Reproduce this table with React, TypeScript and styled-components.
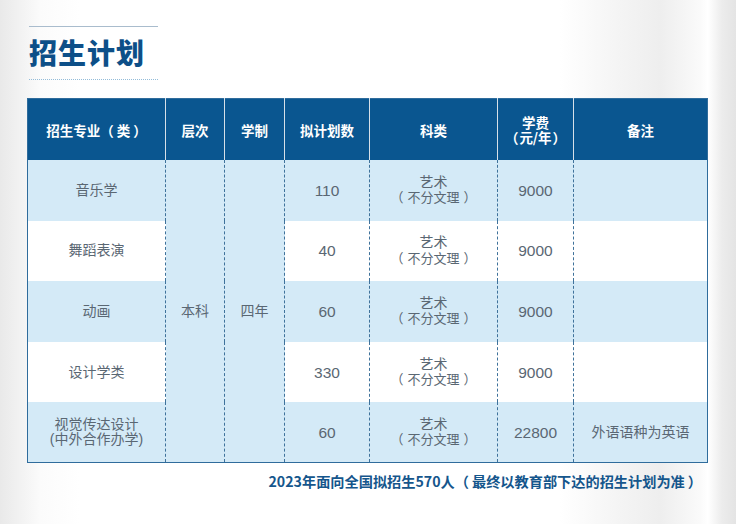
import React from "react";
import styled, { createGlobalStyle } from "styled-components";

const GlobalStyle = createGlobalStyle`
  html, body { margin: 0; padding: 0; }
  body {
    width: 736px;
    height: 524px;
    overflow: hidden;
    font-family: "Liberation Sans", "Noto Sans CJK SC", sans-serif;
    background: linear-gradient(
      to right,
      #e9e9e9 0px,
      #f1f1f1 18px,
      #fbfbfb 40px,
      #ffffff 80px,
      #ffffff 560px,
      #f4f4f4 620px,
      #eeeeee 660px,
      #fafafa 700px,
      #ffffff 708px,
      #ececec 722px,
      #e4e4e4 736px
    );
  }
`;

const Page = styled.div`
  display: flex;
  flex-direction: column;
  padding: 26px 0 0 27px;
  width: 680px;
`;

const Heading = styled.div`
  display: flex;
  flex-direction: column;
  width: 129px;
  margin-left: 2px;
`;

const TopRule = styled.div`
  height: 1px;
  background: #a9bccd;
`;

const Title = styled.h1`
  margin: 10px 0 0 0;
  font-family: "Noto Sans CJK SC", sans-serif;
  font-weight: 900;
  font-size: 28px;
  line-height: 30px;
  letter-spacing: 1px;
  color: #0d4f88;
  white-space: nowrap;
`;

const DottedRule = styled.div`
  margin-top: 12px;
  height: 0;
  border-top: 1px dotted #93bcd9;
`;

const Table = styled.table`
  margin-top: 18px;
  width: 680px;
  border-collapse: collapse;
  table-layout: fixed;
  border: 1px solid #2f6c9c;
`;

const HeadCell = styled.th`
  height: 61px;
  padding: 0;
  background: #0a5690;
  color: #ffffff;
  font-family: "Noto Sans CJK SC", sans-serif;
  font-weight: 600;
  font-size: 13.5px;
  line-height: 16px;
  text-align: center;
  vertical-align: middle;
  border-left: 1px solid #d7e0e8;
  &:first-child { border-left: none; }
`;

const HeadLine = styled.span`
  display: block;
  line-height: 15px;
`;

const Row = styled.tr<{ $alt?: boolean }>`
  height: 60.6px;
  background: ${(p) => (p.$alt ? "#ffffff" : "#d4eaf7")};
  & + & > td { border-top: 1px dashed #3f729b; }
`;

const Cell = styled.td<{ $merged?: boolean; $num?: boolean; $small?: boolean }>`
  padding: 0;
  text-align: center;
  vertical-align: middle;
  color: #5a6773;
  font-size: ${(p) => (p.$num ? "15.5px" : "14px")};
  line-height: ${(p) => (p.$small ? "15.5px" : "17px")};
  border-left: 1px dashed #3f729b;
  background: ${(p) => (p.$merged ? "#d4eaf7" : "transparent")};
  &:first-child { border-left: none; }
`;

const Sub = styled.span`
  display: block;
  font-size: 13px;
`;

const Paren = styled.span<{ $side: "open" | "close"; $gap?: number }>`
  margin-right: ${(p) => (p.$side === "open" ? `${p.$gap ?? 3}px` : "0")};
  margin-left: ${(p) => (p.$side === "close" ? `${p.$gap ?? 3}px` : "0")};
`;

const Note = styled.div`
  margin-top: 9px;
  padding-right: 5px;
  text-align: right;
  font-family: "Noto Sans CJK SC", sans-serif;
  font-weight: 700;
  font-size: 14.2px;
  line-height: 18px;
  color: #15568c;
  white-space: nowrap;
`;

const widths = [138, 59, 60, 85, 128, 76, 134];

type Item = { name: React.ReactNode; count: string; fee: string; remark?: string };

const items: Item[] = [
  { name: "音乐学", count: "110", fee: "9000" },
  { name: "舞蹈表演", count: "40", fee: "9000" },
  { name: "动画", count: "60", fee: "9000" },
  { name: "设计学类", count: "330", fee: "9000" },
  {
    name: (
      <>
        视觉传达设计
        <br />
        (中外合作办学)
      </>
    ),
    count: "60",
    fee: "22800",
    remark: "外语语种为英语",
  },
];

export default function App() {
  return (
    <>
      <GlobalStyle />
      <Page>
        <Heading>
          <TopRule />
          <Title>招生计划</Title>
          <DottedRule />
        </Heading>
        <Table>
          <colgroup>
            {widths.map((w, i) => (
              <col key={i} style={{ width: w }} />
            ))}
          </colgroup>
          <thead>
            <tr>
              <HeadCell>
                招生专业<Paren $side="open">（</Paren>类<Paren $side="close">）</Paren>
              </HeadCell>
              <HeadCell>层次</HeadCell>
              <HeadCell>学制</HeadCell>
              <HeadCell>拟计划数</HeadCell>
              <HeadCell>科类</HeadCell>
              <HeadCell>
                <HeadLine>学费</HeadLine>
                <HeadLine>
                  <Paren $side="open" $gap={1}>（</Paren>元/年<Paren $side="close" $gap={1}>）</Paren>
                </HeadLine>
              </HeadCell>
              <HeadCell>备注</HeadCell>
            </tr>
          </thead>
          <tbody>
            {items.map((it, i) => (
              <Row key={i} $alt={i % 2 === 1}>
                <Cell $small={i === 4}>{it.name}</Cell>
                {i === 0 && (
                  <>
                    <Cell rowSpan={5} $merged>
                      本科
                    </Cell>
                    <Cell rowSpan={5} $merged>
                      四年
                    </Cell>
                  </>
                )}
                <Cell $num>{it.count}</Cell>
                <Cell $small>
                  艺术
                  <Sub>
                    <Paren $side="open" $gap={4}>（</Paren>不分文理<Paren $side="close" $gap={4}>）</Paren>
                  </Sub>
                </Cell>
                <Cell $num>{it.fee}</Cell>
                <Cell>{it.remark ?? ""}</Cell>
              </Row>
            ))}
          </tbody>
        </Table>
        <Note>
          2023年面向全国拟招生570人<Paren $side="open" $gap={3}>（</Paren>最终以教育部下达的招生计划为准
          <Paren $side="close" $gap={3}>）</Paren>
        </Note>
      </Page>
    </>
  );
}
